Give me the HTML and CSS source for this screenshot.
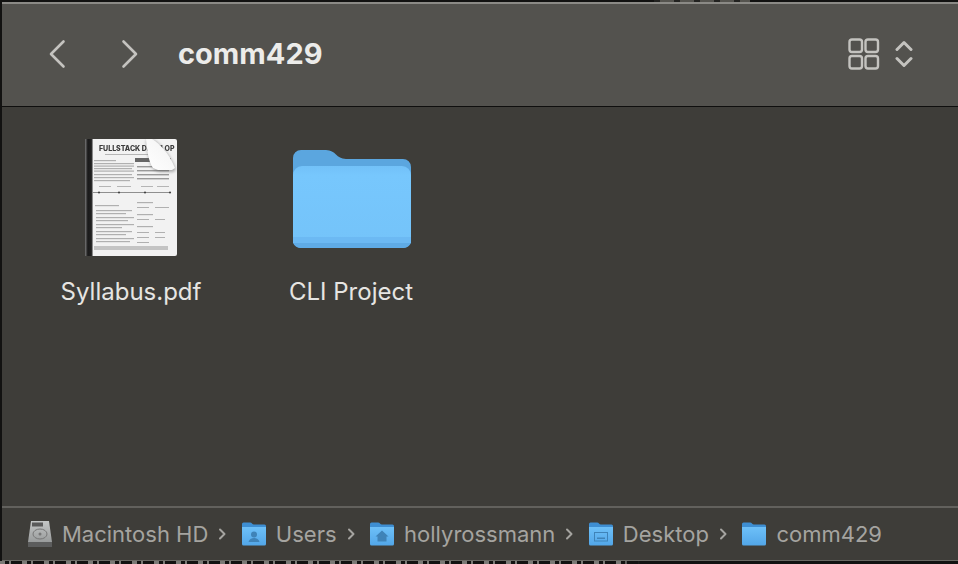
FILE: index.html
```html
<!DOCTYPE html>
<html lang="en">
<head>
<meta charset="utf-8">
<title>comm429</title>
<link rel="stylesheet" href="styles.css">
</head>
<body>
<div class="peek peek-top"></div>
<div class="window">
  <header class="toolbar">
    <div class="nav">
      <svg class="nav-icon" width="20" height="30" viewBox="0 0 20 30"><path d="M16.500 2.500 4 15 16.500 27.500" /></svg>
      <svg class="nav-icon" width="20" height="30" viewBox="0 0 20 30"><path d="M3.500 2.500 16 15 3.500 27.500" /></svg>
    </div>
    <h1 class="title">comm429</h1>
    <div class="view">
      <svg class="grid-icon" width="32" height="32" viewBox="0 0 32 32">
        <rect x="1.500" y="1.500" width="12.500" height="12.500" rx="2.500"/><rect x="17.500" y="1.500" width="12.500" height="12.500" rx="2.500"/>
        <rect x="1.500" y="18" width="12.500" height="12.500" rx="2.500"/><rect x="17.500" y="18" width="12.500" height="12.500" rx="2.500"/>
      </svg>
      <svg class="sort-icon" width="18" height="30" viewBox="0 0 18 30"><path d="M2 10.500 9 3.500 16 10.500"/><path d="M2 19.500 9 26.500 16 19.500"/></svg>
    </div>
  </header>
  <main class="files">
    <figure class="item">
      <div class="thumb thumb-shift">
        <svg width="94" height="118" viewBox="0 0 94 118">
          <defs>
            <linearGradient id="spine" x1="0" x2="1" y1="0" y2="0"><stop offset="0" stop-color="#777"/><stop offset=".35" stop-color="#1a1a1a"/><stop offset=".8" stop-color="#222"/><stop offset="1" stop-color="#bbb"/></linearGradient>
            <linearGradient id="curl" x1="0" x2="1" y1="1" y2="0"><stop offset="0" stop-color="#fff"/><stop offset=".7" stop-color="#f6f6f6"/><stop offset="1" stop-color="#d8d8d8"/></linearGradient>
            <filter id="soft"><feGaussianBlur stdDeviation=".5"/></filter>
            <filter id="softer"><feGaussianBlur stdDeviation="1.500"/></filter>
          </defs>
          <path d="M0 0H90a2 2 0 0 1 2 2V115a2 2 0 0 1-2 2H0Z" fill="#f2f2f2"/>
          <rect x="0" y="0" width="8" height="117" fill="url(#spine)"/>
          <g filter="url(#soft)">
            <text class="pdf-title" x="14" y="12">FULLSTACK DEVELOP</text>
            <rect x="20" y="15" width="52" height="1" fill="#b5b5b5"/>
            <g fill="#b0b0b0">
              <rect x="9" y="21" width="22" height="1.200"/><rect x="9" y="24" width="40" height="1.200"/><rect x="9" y="26.500" width="40" height="1.200"/><rect x="9" y="29" width="38" height="1.200"/><rect x="9" y="31.500" width="40" height="1.200"/><rect x="9" y="35" width="38" height="1.200"/><rect x="9" y="38" width="40" height="1.200"/><rect x="9" y="41" width="36" height="1.200"/>
              <rect x="10" y="66" width="24" height="1.200"/>
              <rect x="11" y="71" width="36" height="1.200"/><rect x="11" y="74" width="30" height="1.200"/><rect x="11" y="78" width="38" height="1.200"/><rect x="11" y="81" width="32" height="1.200"/><rect x="11" y="85" width="38" height="1.200"/><rect x="11" y="88" width="26" height="1.200"/><rect x="11" y="92" width="36" height="1.200"/><rect x="11" y="95" width="30" height="1.200"/><rect x="11" y="99" width="38" height="1.200"/><rect x="11" y="102" width="34" height="1.200"/>
              <rect x="52" y="63" width="16" height="1.200"/><rect x="52" y="68" width="12" height="1"/><rect x="70" y="68" width="14" height="1"/><rect x="52" y="75" width="16" height="1.200"/><rect x="52" y="80" width="12" height="1"/><rect x="70" y="80" width="10" height="1"/><rect x="52" y="87" width="16" height="1.200"/><rect x="52" y="93" width="12" height="1"/><rect x="70" y="93" width="10" height="1"/><rect x="52" y="98" width="12" height="1"/><rect x="70" y="98" width="10" height="1"/><rect x="52" y="103" width="12" height="1"/>
              <rect x="9" y="107" width="74" height="4" opacity=".7"/>
            </g>
            <rect x="8" y="53" width="78" height=".8" fill="#777"/>
            <g fill="#444"><circle cx="14" cy="53.500" r="1.100"/><circle cx="34" cy="53.500" r="1.100"/><circle cx="60" cy="53.500" r="1.100"/><circle cx="85" cy="53.500" r="1.100"/></g>
            <g fill="#b5b5b5"><rect x="14" y="47" width="12" height="1"/><rect x="32" y="47" width="14" height="1"/><rect x="56" y="47" width="12" height="1"/><rect x="72" y="47" width="12" height="1"/></g>
            <rect x="50" y="19" width="36" height="4" fill="#666"/>
            <g fill="#999"><rect x="52" y="27" width="32" height="1.400"/><rect x="52" y="31" width="32" height="1.400"/><rect x="52" y="35" width="32" height="1.400"/><rect x="52" y="39" width="32" height="1.400"/></g>
          </g>
          <path d="M61 1C62 12 64 25 69 31L74 33H88L91 31C85 15 76 6 69 1Z" fill="#555" opacity=".45" filter="url(#softer)"/>
          <path d="M61 0C62 12 64 24 68 29L73 31H87L90 29C84 14 75 5 67 0Z" fill="url(#curl)"/>
        </svg>
      </div>
      <figcaption class="label">Syllabus.pdf</figcaption>
    </figure>
    <figure class="item">
      <div class="thumb thumb-shift">
        <svg width="118" height="118" viewBox="0 0 118 118">
          <defs>
            <linearGradient id="front" x1="0" x2="0" y1="0" y2="1"><stop offset="0" stop-color="#72c1f8"/><stop offset=".12" stop-color="#77c7fd"/><stop offset="1" stop-color="#74c3f9"/></linearGradient>
          </defs>
          <path d="M0 19a8 8 0 0 1 8-8H33c10 0 10 9 20 9H110a8 8 0 0 1 8 8V100H0Z" fill="#5ba6df"/>
          <path d="M0 36a9 9 0 0 1 9-9H109a9 9 0 0 1 9 9V100a9 9 0 0 1-9 9H9a9 9 0 0 1-9-9Z" fill="url(#front)"/>
          <rect y="98" width="118" height="6" fill="#6cb9f3"/>
          <path d="M0 104H118a9 9 0 0 1-9 5H9a9 9 0 0 1-9-5Z" fill="#5fabe6"/>
        </svg>
      </div>
      <figcaption class="label">CLI Project</figcaption>
    </figure>
  </main>
  <footer class="pathbar">
    <svg class="crumb-icon" width="24" height="26" viewBox="0 0 24 26">
      <defs><linearGradient id="hd" x1="0" x2="0" y1="0" y2="1"><stop offset="0" stop-color="#c4c6c6"/><stop offset="1" stop-color="#8f9292"/></linearGradient></defs>
      <path d="M3 0H21L24 21V26H0V21Z" fill="url(#hd)"/><rect x="4" y="1.500" width="11" height="4" fill="#5a5a5a"/>
      <ellipse cx="12" cy="13" rx="7" ry="5" fill="none" stroke="#777"/><circle cx="12" cy="13" r="1.500" fill="#777"/><rect y="21" width="24" height="5" fill="#5c5d5d"/>
    </svg>
    <span class="crumb">Macintosh HD</span>
    <svg class="sep" width="8" height="12" viewBox="0 0 8 12"><path d="M2 1.500 6.500 6 2 10.500"/></svg>
    <svg class="crumb-icon" width="24" height="24" viewBox="0 0 24 24"><use href="#mini"/><circle cx="12" cy="12.500" r="3" fill="#3f83b8"/><path d="M6.500 20c1-5.500 10-5.500 11 0Z" fill="#3f83b8"/></svg>
    <span class="crumb">Users</span>
    <svg class="sep" width="8" height="12" viewBox="0 0 8 12"><path d="M2 1.500 6.500 6 2 10.500"/></svg>
    <svg class="crumb-icon" width="24" height="24" viewBox="0 0 24 24"><use href="#mini"/><path d="M12 8.500 18.500 14.500H16.500V19.500H7.500V14.500H5.500Z" fill="#3f83b8"/></svg>
    <span class="crumb">hollyrossmann</span>
    <svg class="sep" width="8" height="12" viewBox="0 0 8 12"><path d="M2 1.500 6.500 6 2 10.500"/></svg>
    <svg class="crumb-icon" width="24" height="24" viewBox="0 0 24 24"><use href="#mini"/><rect x="5.500" y="10.500" width="13" height="8.500" fill="none" stroke="#3f83b8"/><rect x="8" y="15.500" width="8" height="1.500" fill="#3f83b8"/></svg>
    <span class="crumb">Desktop</span>
    <svg class="sep" width="8" height="12" viewBox="0 0 8 12"><path d="M2 1.500 6.500 6 2 10.500"/></svg>
    <svg class="crumb-icon" width="24" height="24" viewBox="0 0 24 24"><use href="#mini"/></svg>
    <span class="crumb">comm429</span>
    <svg class="defs" width="0" height="0"><defs>
      <linearGradient id="minifront" x1="0" x2="0" y1="0" y2="1"><stop offset="0" stop-color="#6ec0f8"/><stop offset="1" stop-color="#52a6e8"/></linearGradient>
      <g id="mini"><path d="M0 2a1.500 1.500 0 0 1 1.500-1.500H8c2 0 2 2 4 2H22.500A1.500 1.500 0 0 1 24 4V8H0Z" fill="#3e8ed2"/><path d="M0 5H24V22a1.500 1.500 0 0 1-1.500 1.500H1.500A1.500 1.500 0 0 1 0 22Z" fill="url(#minifront)"/></g>
    </defs></svg>
  </footer>
</div>
<div class="peek peek-bottom"></div>
</body>
</html>
```
FILE: styles.css
```css
* { box-sizing: border-box; }
html, body { margin: 0; height: 100%; overflow: hidden; }
body { background: #121211; font-family: "Inter", "Liberation Sans", sans-serif; display: flex; flex-direction: column; }
.peek { flex: none; }
.peek-top { height: 2px; background: repeating-linear-gradient(90deg, #55544f 0 14px, #222220 14px 20px); mask-image: linear-gradient(90deg, transparent 654px, #000 654px, #000 750px, transparent 750px); }
.peek-bottom { height: 3px; background: repeating-linear-gradient(90deg, #7a7a76 0 5px, #121211 5px 9px, #7a7a76 9px 11px, #121211 11px 22px); mask-image: linear-gradient(90deg, #000 0, #000 620px, transparent 640px); }
.window { height: 559px; flex: none; margin-left: 2px; background: #3e3d39; border-top: 2px solid #8b8a86; border-bottom: 1px solid #6a6964; display: flex; flex-direction: column; }
.toolbar { height: 103px; flex: none; background: #53524e; border-bottom: 1px solid #0f0f0e; display: flex; align-items: center; padding: 0 45px 3px 45px; }
.nav { display: flex; gap: 53px; }
.nav-icon, .sort-icon { fill: none; stroke: #c4c3bf; stroke-width: 2.6; stroke-linecap: round; stroke-linejoin: round; }
.sort-icon { stroke-width: 3; }
.title { margin: 0 0 0 38px; font-family: "Inter", "Liberation Sans", sans-serif; font-size: 29px; font-weight: 700; color: #ececea; }
.view { margin-left: auto; display: flex; align-items: center; gap: 15px; }
.grid-icon { fill: none; stroke: #c4c3bf; stroke-width: 2.4; }
.files { flex: 1; display: flex; align-items: flex-start; padding-top: 32px; padding-left: 63px; gap: 88px; }
.item { margin: 0; display: flex; flex-direction: column; align-items: center; gap: 20px; width: 132px; }
.thumb { height: 118px; display: flex; }
.thumb-shift { margin-left: 2px; }
.pdf-title { font-family: "Inter", "Liberation Sans", sans-serif; font-size: 7px; font-weight: 800; fill: #3a3a3a; }
.label { font-size: 24px; line-height: 29px; color: #e6e5e2; white-space: nowrap; }
.pathbar { height: 54px; flex: none; border-top: 2px solid #62615d; display: flex; align-items: center; padding-left: 26px; font-size: 22px; color: #a5a4a0; }
.crumb { margin-left: 10px; white-space: nowrap; }
.sep { margin: 0 15.500px 0 10px; fill: none; stroke: #a5a4a0; stroke-width: 2; stroke-linecap: round; stroke-linejoin: round; flex: none; }
.defs { position: absolute; }
```
